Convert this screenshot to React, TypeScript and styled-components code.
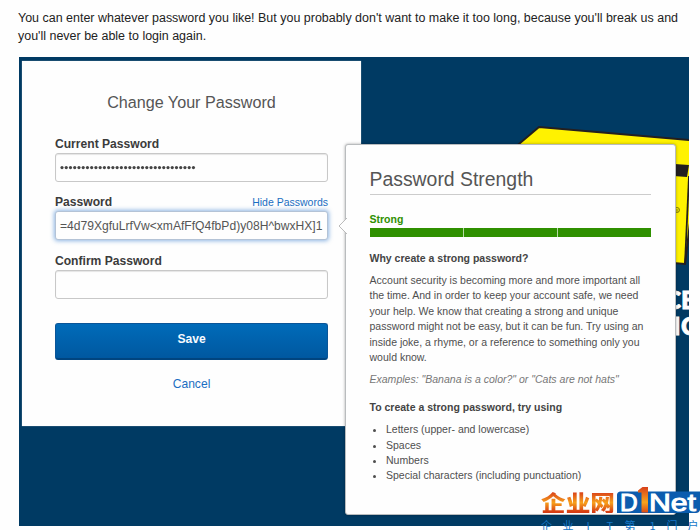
import React from "react";
import styled, { createGlobalStyle } from "styled-components";

const GlobalStyle = createGlobalStyle`
  * { box-sizing: border-box; }
  body { margin: 0; background: #fefefe; font-family: "Liberation Sans", Arial, sans-serif; }
`;

const Page = styled.main`
  position: relative;
  width: 700px;
  height: 530px;
  overflow: hidden;
  padding: 9px 11px 0 19px;
`;

const Intro = styled.p`
  margin: 0 0 0 -1px;
  height: 48px;
  font-size: 12.47px;
  line-height: 18px;
  color: #222;
  white-space: nowrap;
`;

const Stage = styled.section`
  position: relative;
  width: 670px;
  height: 469px;
  padding: 4px 3px;
  overflow: hidden;
  background: #003a63;
`;

const Artwork = styled.svg`
  position: absolute;
  inset: 0;
`;

const Card = styled.form`
  position: relative;
  display: flex;
  flex-direction: column;
  width: 339px;
  height: 365px;
  padding: 32px 33px 0;
  background: #fefefe;
  box-shadow: 0 0 1px rgba(190, 200, 205, 0.8);
`;

const CardTitle = styled.h1`
  margin: 0 -2px 24px;
  font-size: 16.15px;
  line-height: 18px;
  font-weight: 400;
  text-align: center;
  color: #555;
`;

const Field = styled.div`
  display: flex;
  flex-direction: column;
  height: 58.3px;
`;

const LabelRow = styled.div`
  display: flex;
  justify-content: space-between;
  align-items: baseline;
  height: 18px;
  line-height: 18px;
`;

const Label = styled.label`
  font-size: 12.1px;
  font-weight: 700;
  color: #3b3b3b;
`;

const TextLink = styled.a<{ $size: number }>`
  font-size: ${(p) => p.$size}px;
  color: #1b6ec2;
  text-decoration: none;
`;

const Box = styled.div<{ $focus?: boolean }>`
  display: flex;
  align-items: center;
  height: 29px;
  padding: 0 4px;
  border: 1px solid ${(p) => (p.$focus ? "#b4c3d6" : "#c8c8c8")};
  border-radius: 3px;
  background: #fefefe;
  box-shadow: ${(p) =>
    p.$focus ? "0 0 4px 1px rgba(70, 135, 210, 0.6)" : "inset 0 1px 1px rgba(0, 0, 0, 0.1)"};
  font-size: 12.1px;
  color: #555;
  white-space: nowrap;
`;

const Dots = styled.svg`
  display: block;
`;

const SaveButton = styled.button`
  flex: none;
  height: 37px;
  margin: 13px 0 15px;
  padding: 0 0 3px;
  border: 1px solid #0a5598;
  border-bottom: 2px solid #00447f;
  border-radius: 3px;
  background: linear-gradient(#006bb9, #0058a0);
  font: 700 12.1px "Liberation Sans", Arial, sans-serif;
  color: #f6faff;
`;

const CancelRow = styled.div`
  line-height: 16px;
  text-align: center;
`;

const Popover = styled.aside`
  position: absolute;
  left: 326px;
  top: 87px;
  width: 331px;
  height: 371px;
  padding: 23px 24px 0 23.5px;
  border: 1px solid #b9bcbe;
  border-radius: 3px;
  background: #fefefe;
  box-shadow: 0 0 3px rgba(0, 0, 0, 0.35);
  font-size: 10.53px;
  line-height: 15.4px;
  color: #4f4f4f;
`;

const Pointer = styled.svg`
  position: absolute;
  left: -8px;
  top: 72px;
`;

const PopTitle = styled.h2`
  height: 27px;
  margin: 0 0 17px;
  border-bottom: 1px solid #ccc;
  font-size: 19.4px;
  line-height: 22px;
  font-weight: 400;
  color: #555;
`;

const Rating = styled.div`
  height: 15.5px;
  font-weight: 700;
  color: #2f9000;
`;

const Meter = styled.div`
  display: grid;
  grid-template-columns: repeat(3, 1fr);
  gap: 1px;
  height: 9px;
  margin-bottom: 14.5px;
  background: #b6d9a5;
`;

const MeterPart = styled.span`
  background: #2f9000;
`;

const SubHead = styled.h3`
  margin: 0 0 6.5px;
  font-size: inherit;
  font-weight: 700;
  color: #444;
`;

const Copy = styled.p`
  margin: 0 0 7px;
  white-space: nowrap;
`;

const Examples = styled.p`
  margin: 0 0 12.5px;
  font-style: italic;
  color: #777;
`;

const Tips = styled.ul`
  margin: 0;
  padding-left: 16.5px;
`;

const Brand = styled.div`
  position: absolute;
  left: 541px;
  top: 486px;
  width: 159px;
  height: 44px;
  overflow: hidden;
`;

const BrandRow = styled.div`
  display: flex;
  height: 28px;
`;

const Cjk = styled.span`
  width: 66px;
  height: 23px;
  margin: 4px 10px 0 0;
  font: 900 22px/23px "Noto Sans CJK SC", sans-serif;
  color: transparent;
  background: linear-gradient(#d9411a 10%, #f7a11b 55%, #d63b12 95%);
  background-clip: text;
  -webkit-background-clip: text;
  filter: drop-shadow(0 0 0.6px #fff) drop-shadow(0 0 0.6px #fff);
  white-space: nowrap;
  transform: scale(1.12, 1);
  transform-origin: 0 50%;
`;

const Tagline = styled.div`
  display: grid;
  grid-template-columns: 21.5px 24px 20px 18px 25px 17px 21px 12px;
  padding-top: 4px;
  font: 400 11px/14px "Noto Sans CJK SC", sans-serif;
  color: #1577c8;
  white-space: nowrap;
`;

const fields = ["Current Password", "Password", "Confirm Password"];

function MaskedValue() {
  return (
    <Dots width="140" height="6">
      {Array.from({ length: 32 }, (_, i) => (
        <circle key={i} cx={2 + i * 4.24} cy="2.6" r="1.6" fill="#444" />
      ))}
    </Dots>
  );
}

export default function App() {
  return (
    <Page>
      <GlobalStyle />
      <Intro>
        You can enter whatever password you like! But you probably don't want to make it too long, because you'll break us and
        <br />
        you'll never be able to login again.
      </Intro>
      <Stage>
        <Artwork width="670" height="469" viewBox="19 57 670 469">
          <path d="M500 160 539 127 700 141 685 264 600 257Z" fill="#fff200" stroke="#231f20" strokeWidth="2" />
          <path d="M660 163 689 165 687 177 660 175Z" fill="#231f20" />
          <path d="M689 176 685 264" fill="none" stroke="#231f20" strokeWidth="1.8" />
          <circle cx="677" cy="210" r="2.5" fill="none" stroke="#6d6500" strokeWidth="0.8" />
          <text x="675.5" y="211.5" fontSize="4" fill="#6d6500">R</text>
          <g fill="#fff" stroke="#fff" strokeWidth="0.8" fontFamily="Lato, sans-serif" fontWeight="900" fontSize="25">
            <text x="664.5" y="308.5">C</text>
            <text x="681" y="308.5">E</text>
            <text x="673" y="335">I</text>
            <text x="681" y="335">C</text>
          </g>
        </Artwork>
        <Card>
          <CardTitle>Change Your Password</CardTitle>
          {fields.map((name, i) => (
            <Field key={name}>
              <LabelRow>
                <Label>{name}</Label>
                {i === 1 && <TextLink $size={10.5}>Hide Passwords</TextLink>}
              </LabelRow>
              <Box $focus={i === 1}>
                {i === 0 && <MaskedValue />}
                {i === 1 && "=4d79XgfuLrfVw<xmAfFfQ4fbPd)y08H^bwxHX]1"}
              </Box>
            </Field>
          ))}
          <SaveButton type="button">Save</SaveButton>
          <CancelRow>
            <TextLink $size={12.1}>Cancel</TextLink>
          </CancelRow>
        </Card>
        <Popover>
          <Pointer width="9" height="18">
            <path d="M9 1 1 9 9 17" fill="#fefefe" stroke="#bbb" />
          </Pointer>
          <PopTitle>Password Strength</PopTitle>
          <Rating>Strong</Rating>
          <Meter>
            <MeterPart />
            <MeterPart />
            <MeterPart />
          </Meter>
          <SubHead>Why create a strong password?</SubHead>
          <Copy>
            Account security is becoming more and more important all
            <br />
            the time. And in order to keep your account safe, we need
            <br />
            your help. We know that creating a strong and unique
            <br />
            password might not be easy, but it can be fun. Try using an
            <br />
            inside joke, a rhyme, or a reference to something only you
            <br />
            would know.
          </Copy>
          <Examples>Examples: "Banana is a color?" or "Cats are not hats"</Examples>
          <SubHead>To create a strong password, try using</SubHead>
          <Tips>
            <li>Letters (upper- and lowercase)</li>
            <li>Spaces</li>
            <li>Numbers</li>
            <li>Special characters (including punctuation)</li>
          </Tips>
        </Popover>
      </Stage>
      <Brand>
        <BrandRow>
          <Cjk>企业网</Cjk>
          <svg width="83" height="28">
            <defs>
              <linearGradient id="flame" x1="0" y1="0" x2="0" y2="1">
                <stop offset="0" stopColor="#d8401a" />
                <stop offset="0.6" stopColor="#f8a41c" />
                <stop offset="1" stopColor="#dc4a14" />
              </linearGradient>
            </defs>
            <path d="M3 5.5H83V24Q82 27 79 27H0V9Q0 6 3 5.5Z" fill="#0b5cae" />
            <g fill="#fff" stroke="#fff" strokeWidth="1" fontFamily="Liberation Sans, Arial, sans-serif" fontSize="24.5">
              <text x="3" y="25">D</text>
              <text x="32" y="25" textLength="47" lengthAdjust="spacingAndGlyphs">Net</text>
            </g>
            <path d="M21 4.5 25.5 1H31V26.5H24.5V6.5H21Z" fill="url(#flame)" />
          </svg>
        </BrandRow>
        <Tagline>
          {["企", "业", "I", "T", "第", "1", "门", "户"].map((c) => (
            <span key={c}>{c}</span>
          ))}
        </Tagline>
      </Brand>
    </Page>
  );
}
